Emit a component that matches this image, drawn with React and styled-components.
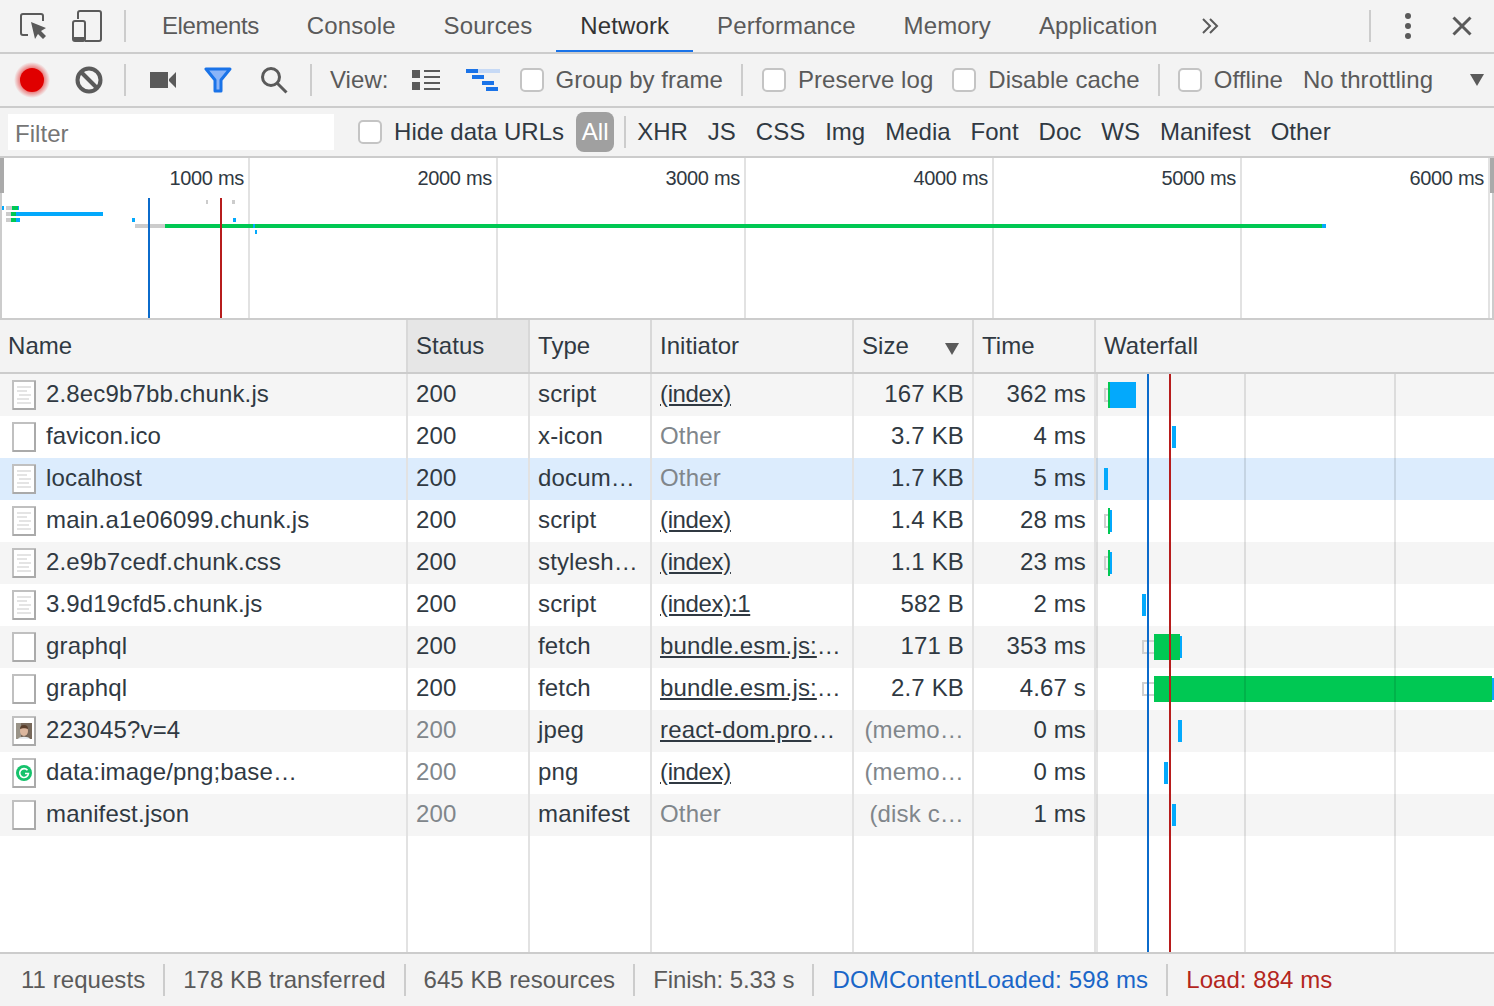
import React from "react";
import styled, { createGlobalStyle } from "styled-components";

const GlobalStyle = createGlobalStyle`
    html, body {
        margin: 0;
        padding: 0;
        background: #fff;
    }
    * {
        box-sizing: border-box;
    }
`;

const Page = styled.div`
    width: 1494px;
    height: 1006px;
    display: flex;
    flex-direction: column;
    overflow: hidden;
    font-family: "Liberation Sans", Arial, sans-serif;
    font-size: 24px;
    letter-spacing: 0.05px;
    color: #303942;
`;

const TabBar = styled.div`
    height: 54px;
    flex: none;
    display: flex;
    align-items: center;
    padding-left: 20px;
    background: #f3f3f3;
    border-bottom: 2px solid #ccc;
`;

const Tab = styled.div`
    height: 52px;
    padding: 0 24px;
    display: flex;
    align-items: center;
    letter-spacing: ${(p) => (p.$tight ? "-0.4px" : "0.1px")};
    color: ${(p) => (p.$active ? "#333" : "#5a5a5a")};
    box-shadow: ${(p) => (p.$active ? "inset 0 -2px 0 #1a73e8" : "none")};
`;

const Toolbar = styled.div`
    height: 54px;
    flex: none;
    display: flex;
    align-items: center;
    background: #f3f3f3;
    border-bottom: 2px solid #ccc;
    color: #5a5a5a;
`;

const Sep = styled.div`
    flex: none;
    width: 2px;
    height: 32px;
    background: #ccc;
    margin-left: ${(p) => p.$ml || 0}px;
    margin-right: ${(p) => p.$mr || 0}px;
`;

const Icon = styled.svg`
    flex: none;
    display: block;
    margin-left: ${(p) => p.$ml || 0}px;
`;

const Check = styled.input.attrs({ type: "checkbox" })`
    appearance: none;
    flex: none;
    width: 24px;
    height: 24px;
    margin: 0 12px 0 ${(p) => p.$ml || 0}px;
    background: #fff;
    border: 2px solid #c4c4c4;
    border-radius: 5px;
`;

const Label = styled.span`
    flex: none;
    white-space: nowrap;
    margin-left: ${(p) => p.$ml || 0}px;
`;

const FilterBar = styled.div`
    height: 50px;
    flex: none;
    display: flex;
    align-items: center;
    padding-left: 8px;
    background: #f3f3f3;
    border-bottom: 2px solid #ccc;
`;

const FilterInput = styled.div`
    width: 326px;
    height: 36px;
    flex: none;
    display: flex;
    align-items: center;
    padding: 3px 0 0 7px;
    margin-right: 24px;
    background: #fff;
    color: #757575;
`;

const Pill = styled.div`
    flex: none;
    height: 40px;
    width: 38px;
    margin: 0 10px 0 12px;
    display: flex;
    align-items: center;
    justify-content: center;
    border-radius: 8px;
    background: #a0a0a0;
    color: #fff;
`;

const TypeFilters = styled.div`
    display: flex;
    gap: 20px;
    margin-left: 11px;
    letter-spacing: 0;
`;

const Overview = styled.div`
    position: relative;
    height: 162px;
    flex: none;
    display: flex;
    padding-left: 2px;
    background: #fff;
    border-bottom: 2px solid #ccc;
`;

const OverviewTick = styled.div`
    width: 248px;
    flex: none;
    padding: 8px 4px 0 0;
    text-align: right;
    font-size: 20px;
    letter-spacing: -0.3px;
    line-height: 24px;
    border-right: 2px solid #e2e2e2;
`;

const Chart = styled.svg`
    position: absolute;
    left: 0;
    top: 0;
    pointer-events: none;
`;

const Table = styled.div`
    flex: 1;
    min-height: 0;
    display: flex;
    flex-direction: column;
`;

const Columns = "408px 122px 122px 202px 120px 122px 1fr";

const HeaderRow = styled.div`
    height: 54px;
    flex: none;
    display: grid;
    grid-template-columns: ${Columns};
    background: #f3f3f3;
    border-bottom: 2px solid #ccc;
`;

const HeaderCell = styled.div`
    position: relative;
    display: flex;
    align-items: center;
    padding: 0 8px;
    background: ${(p) => (p.$sorted ? "#e6e6e6" : "transparent")};
    border-right: 2px solid #d8d8d8;
`;

const SortArrow = styled.svg`
    position: absolute;
    right: 13px;
    top: 23px;
`;

const Body = styled.div`
    position: relative;
    flex: 1;
    min-height: 0;
    display: flex;
    flex-direction: column;
`;

const Row = styled.div`
    height: ${(p) => (p.$filler ? "auto" : "42px")};
    flex: ${(p) => (p.$filler ? 1 : "none")};
    display: grid;
    grid-template-columns: ${Columns};
    letter-spacing: 0.15px;
    background: ${(p) => (p.$selected ? "#dcecfd" : p.$odd ? "#f5f5f5" : "#fff")};
`;

const Cell = styled.div`
    min-width: 0;
    padding: 0 8px;
    line-height: 40px;
    white-space: nowrap;
    overflow: hidden;
    text-overflow: ellipsis;
    text-align: ${(p) => (p.$right ? "right" : "left")};
    letter-spacing: ${(p) => (p.$tight ? "-0.35px" : "inherit")};
    color: ${(p) => (p.$muted ? "#80868b" : "inherit")};
    text-decoration: ${(p) => (p.$link ? "underline" : "none")};
    border-right: 2px solid #e2e2e2;
`;

const NameCell = styled(Cell)`
    display: flex;
    align-items: center;
    padding: 0 0 0 12px;
`;

const NameText = styled.span`
    margin: 0 0 2px 10px;
`;

const Footer = styled.div`
    height: 54px;
    flex: none;
    display: flex;
    align-items: center;
    background: #f3f3f3;
    border-top: 2px solid #ccc;
    color: #5a5a5a;
`;

const FooterItem = styled.div`
    flex: none;
    height: 32px;
    line-height: 32px;
    padding: 0 18px 0 ${(p) => (p.$first ? 21 : 18)}px;
    border-right: ${(p) => (p.$last ? "none" : "2px solid #ccc")};
    letter-spacing: ${(p) => p.$spacing || "inherit"};
    color: ${(p) => p.$color || "inherit"};
`;

const requests = [
    { name: "2.8ec9b7bb.chunk.js", icon: "doc", status: "200", type: "script", init: "(index)", link: true, size: "167 KB", time: "362 ms" },
    { name: "favicon.ico", icon: "blank", status: "200", type: "x-icon", init: "Other", size: "3.7 KB", time: "4 ms" },
    { name: "localhost", icon: "doc", status: "200", type: "document", init: "Other", size: "1.7 KB", time: "5 ms", selected: true },
    { name: "main.a1e06099.chunk.js", icon: "doc", status: "200", type: "script", init: "(index)", link: true, size: "1.4 KB", time: "28 ms" },
    { name: "2.e9b7cedf.chunk.css", icon: "doc", status: "200", type: "stylesheet", init: "(index)", link: true, size: "1.1 KB", time: "23 ms" },
    { name: "3.9d19cfd5.chunk.js", icon: "doc", status: "200", type: "script", init: "(index):1", link: true, size: "582 B", time: "2 ms" },
    { name: "graphql", icon: "blank", status: "200", type: "fetch", init: "bundle.esm.js:1234", link: true, size: "171 B", time: "353 ms" },
    { name: "graphql", icon: "blank", status: "200", type: "fetch", init: "bundle.esm.js:1234", link: true, size: "2.7 KB", time: "4.67 s" },
    { name: "223045?v=4", icon: "photo", status: "200", muted: true, type: "jpeg", init: "react-dom.production.min.js:1", link: true, size: "(memo…", sizeMuted: true, time: "0 ms" },
    { name: "data:image/png;base…", icon: "grammarly", status: "200", muted: true, type: "png", init: "(index)", link: true, size: "(memo…", sizeMuted: true, time: "0 ms" },
    { name: "manifest.json", icon: "blank", status: "200", muted: true, type: "manifest", init: "Other", size: "(disk c…", sizeMuted: true, time: "1 ms" },
];

const BLUE = "#03a9fc";
const GREEN = "#00c853";

// [x, y, width, height, colour]; x and y are page pixels minus the chart origin
const overviewBars = [
    [2, 48, 2, 4, BLUE], [6, 48, 6, 4, "#ccc"], [12, 48, 6, 4, GREEN], [18, 48, 1, 4, BLUE],
    [6, 54, 5, 4, "#ccc"], [11, 54, 5, 4, GREEN], [16, 54, 87, 4, BLUE],
    [6, 60, 5, 4, "#ccc"], [11, 60, 5, 4, GREEN], [16, 60, 4, 4, BLUE],
    [132, 60, 3, 4, BLUE], [233, 60, 3, 4, BLUE],
    [206, 42, 2, 4, "#ccc"], [232, 42, 3, 4, "#ccc"],
    [135, 66, 30, 4, "#ccc"], [165, 66, 1161, 4, GREEN], [1322, 66, 4, 4, BLUE],
    [253, 66, 2, 4, BLUE], [255, 72, 2, 4, BLUE],
];

const waterfallRows = [
    { wait: [8, 4], green: [12, 2], blue: [14, 26], tall: true },
    { blue: [76, 4] },
    { blue: [8, 4] },
    { wait: [8, 4], green: [12, 2], blue: [14, 2] },
    { wait: [8, 4], green: [12, 2], blue: [14, 2] },
    { blue: [46, 4] },
    { wait: [46, 12], green: [58, 26], blue: [84, 2] },
    { wait: [46, 12], green: [58, 338], blue: [396, 2] },
    { blue: [82, 4] },
    { blue: [68, 4] },
    { blue: [76, 4] },
];

function FileIcon({ kind }) {
    return (
        <Icon width="24" height="30" viewBox="0 0 24 30">
            <rect x="1" y="1" width="22" height="28" fill="#fff" stroke="#c0c0c0" strokeWidth="2" />
            <path d="M1 29h22V1" fill="none" stroke="#aaa" strokeWidth="2" />
            {kind === "doc" && (
                <path d="M5 7h14M5 11h10M7 15h12M5 19h12M5 23h14" stroke="#e4e4e4" strokeWidth="2" />
            )}
            {kind === "photo" && (
                <g>
                    <rect x="4" y="7" width="16" height="16" fill="#77685a" />
                    <rect x="4" y="7" width="5" height="16" fill="#9a9488" />
                    <ellipse cx="12" cy="15" rx="4" ry="5" fill="#dcb79e" />
                    <path d="M8 13a4 4 0 0 1 8 0c-2-1-6-1-8 0z" fill="#5a3e2b" />
                    <path d="M6 23c1-3 11-3 12 0z" fill="#e8ecef" />
                </g>
            )}
            {kind === "grammarly" && (
                <g>
                    <circle cx="12" cy="15" r="8" fill="#15c26b" />
                    <path d="M15.5 12.2a4.4 4.4 0 1 0 1 3.3h-3.5" fill="none" stroke="#fff" strokeWidth="1.6" />
                </g>
            )}
        </Icon>
    );
}

function Waterfall() {
    return (
        <Chart style={{ left: 1094 }} width="400" height="578" viewBox="0 0 400 578">
            <rect x="2" y="0" width="2" height="578" fill="rgba(0,0,0,0.1)" />
            {waterfallRows.map((r, i) => {
                const top = i * 42;
                return (
                    <g key={i}>
                        {r.wait && (
                            <path
                                d={`M${r.wait[0] + r.wait[1] + 2} ${top + 15}H${r.wait[0] + 3}V${top + 27}H${r.wait[0] + r.wait[1] + 2}`}
                                fill="none"
                                stroke="#d0d0d0"
                                strokeWidth="2"
                            />
                        )}
                        {r.blue && (
                            <rect x={r.blue[0] + 2} y={top + (r.tall ? 8 : 10)} width={r.blue[1]} height={r.tall ? 26 : 22} fill={BLUE} />
                        )}
                        {r.green && <rect x={r.green[0] + 2} y={top + 8} width={r.green[1]} height="26" fill={GREEN} />}
                    </g>
                );
            })}
            <rect x="150" y="0" width="2" height="578" fill="rgba(0,0,0,0.1)" />
            <rect x="300" y="0" width="2" height="578" fill="rgba(0,0,0,0.1)" />
            <rect x="53" y="0" width="2" height="578" fill="#0b6bcb" />
            <rect x="75" y="0" width="2" height="578" fill="#b71c1c" />
        </Chart>
    );
}

export default function App() {
    return (
        <Page>
            <GlobalStyle />
            <TabBar>
                <Icon width="28" height="28" viewBox="0 0 28 28">
                    <path d="M8 23H3a2 2 0 0 1-2-2V4a2 2 0 0 1 2-2h18a2 2 0 0 1 2 2v5" fill="none" stroke="#5a5a5a" strokeWidth="2" />
                    <path d="M11 10l15 6-5 3 5 5-3 3-5-5-3 5z" fill="#5a5a5a" />
                </Icon>
                <Icon $ml={24} width="30" height="32" viewBox="0 0 30 32">
                    <path d="M6 9V3a2 2 0 0 1 2-2h19a2 2 0 0 1 2 2v26a2 2 0 0 1-2 2H13" fill="none" stroke="#5a5a5a" strokeWidth="2" />
                    <rect x="1" y="11" width="12" height="20" rx="2" fill="none" stroke="#5a5a5a" strokeWidth="2" />
                    <rect x="1" y="27" width="12" height="4" fill="#5a5a5a" />
                </Icon>
                <Sep $ml={22} $mr={12} />
                <Tab $tight>Elements</Tab>
                <Tab>Console</Tab>
                <Tab>Sources</Tab>
                <Tab $active>Network</Tab>
                <Tab>Performance</Tab>
                <Tab>Memory</Tab>
                <Tab>Application</Tab>
                <Icon $ml={20} width="18" height="16" viewBox="0 0 18 16">
                    <path d="M2 1l7 7-7 7M9 1l7 7-7 7" fill="none" stroke="#5a5a5a" strokeWidth="2" />
                </Icon>
                <Sep style={{ marginLeft: "auto" }} />
                <Icon $ml={34} width="6" height="26" viewBox="0 0 6 26">
                    <circle cx="3" cy="3" r="3" fill="#5a5a5a" />
                    <circle cx="3" cy="13" r="3" fill="#5a5a5a" />
                    <circle cx="3" cy="23" r="3" fill="#5a5a5a" />
                </Icon>
                <Icon $ml={41} width="20" height="20" viewBox="0 0 20 20">
                    <path d="M1.5 1.5l17 17M18.5 1.5l-17 17" fill="none" stroke="#5a5a5a" strokeWidth="3" />
                </Icon>
                <div style={{ width: 22 }} />
            </TabBar>

            <Toolbar>
                <Icon $ml={14} width="36" height="36" viewBox="0 0 36 36">
                    <defs>
                        <radialGradient id="recordGlow">
                            <stop offset="0.65" stopColor="#e00000" stopOpacity="0.5" />
                            <stop offset="1" stopColor="#e00000" stopOpacity="0" />
                        </radialGradient>
                    </defs>
                    <circle cx="18" cy="18" r="18" fill="url(#recordGlow)" />
                    <circle cx="18" cy="18" r="12" fill="#e00000" />
                </Icon>
                <Icon $ml={25} width="28" height="28" viewBox="0 0 28 28">
                    <circle cx="14" cy="14" r="11.5" fill="none" stroke="#5a5a5a" strokeWidth="4" />
                    <path d="M6 6l16 16" stroke="#5a5a5a" strokeWidth="4" />
                </Icon>
                <Sep $ml={21} />
                <Icon $ml={24} width="26" height="18" viewBox="0 0 26 18">
                    <path d="M0 1h18v16H0zM19 8l7-7v16l-7-7z" fill="#5a5a5a" />
                </Icon>
                <Icon $ml={28} width="28" height="26" viewBox="0 0 28 26">
                    <path d="M2 2h24L17 13v11h-6V13z" fill="#8ab4f8" stroke="#1a73e8" strokeWidth="3" strokeLinejoin="round" />
                </Icon>
                <Icon $ml={28} width="28" height="28" viewBox="0 0 28 28">
                    <circle cx="11" cy="11" r="8.5" fill="none" stroke="#5a5a5a" strokeWidth="3" />
                    <path d="M17 17l9.5 9.5" stroke="#5a5a5a" strokeWidth="3" />
                </Icon>
                <Sep $ml={22} />
                <Label $ml={18}>View:</Label>
                <Icon $ml={23} width="28" height="20" viewBox="0 0 28 20">
                    <path d="M0 0h8v8H0zM0 12h8v8H0z" fill="#5a5a5a" />
                    <path d="M12 1h16M12 7h16M12 13h16M12 19h16" stroke="#5a5a5a" strokeWidth="2" />
                </Icon>
                <Icon $ml={26} width="34" height="22" viewBox="0 0 34 22">
                    <rect x="12" y="0" width="22" height="4" fill="#c6d9f5" />
                    <rect x="0" y="0" width="12" height="4" fill="#1a73e8" />
                    <rect x="6" y="6" width="12" height="4" fill="#1a73e8" />
                    <rect x="16" y="12" width="12" height="4" fill="#1a73e8" />
                    <rect x="20" y="18" width="12" height="4" fill="#1a73e8" />
                </Icon>
                <Check $ml={20} />
                <Label>Group by frame</Label>
                <Sep $ml={18} />
                <Check $ml={19} />
                <Label>Preserve log</Label>
                <Check $ml={19} />
                <Label>Disable cache</Label>
                <Sep $ml={18} />
                <Check $ml={18} />
                <Label>Offline</Label>
                <Label $ml={20}>No throttling</Label>
                <Icon $ml={37} width="14" height="12" viewBox="0 0 14 12">
                    <path d="M0 0h14L7 12z" fill="#5a5a5a" />
                </Icon>
            </Toolbar>

            <FilterBar>
                <FilterInput>Filter</FilterInput>
                <Check />
                <Label>Hide data URLs</Label>
                <Pill>All</Pill>
                <Sep />
                <TypeFilters>
                    <span>XHR</span>
                    <span>JS</span>
                    <span>CSS</span>
                    <span>Img</span>
                    <span>Media</span>
                    <span>Font</span>
                    <span>Doc</span>
                    <span>WS</span>
                    <span>Manifest</span>
                    <span>Other</span>
                </TypeFilters>
            </FilterBar>

            <Overview>
                {["1000 ms", "2000 ms", "3000 ms", "4000 ms", "5000 ms", "6000 ms"].map((tick) => (
                    <OverviewTick key={tick}>{tick}</OverviewTick>
                ))}
                <Chart width="1494" height="160" viewBox="0 0 1494 160">
                    <rect x="0" y="0" width="4" height="35" fill="#aaa" />
                    <rect x="0" y="35" width="2" height="125" fill="#ccc" />
                    <rect x="1490" y="0" width="4" height="35" fill="#aaa" />
                    <rect x="1492" y="35" width="2" height="125" fill="#ccc" />
                    {overviewBars.map((b, i) => (
                        <rect key={i} x={b[0]} y={b[1]} width={b[2]} height={b[3]} fill={b[4]} />
                    ))}
                    <rect x="148" y="40" width="2" height="120" fill="#0b6bcb" />
                    <rect x="220" y="40" width="2" height="120" fill="#b71c1c" />
                </Chart>
            </Overview>

            <Table>
                <HeaderRow>
                    <HeaderCell>Name</HeaderCell>
                    <HeaderCell $sorted>Status</HeaderCell>
                    <HeaderCell>Type</HeaderCell>
                    <HeaderCell>Initiator</HeaderCell>
                    <HeaderCell>
                        Size
                        <SortArrow width="14" height="12" viewBox="0 0 14 12">
                            <path d="M0 0h14L7 12z" fill="#5a5a5a" />
                        </SortArrow>
                    </HeaderCell>
                    <HeaderCell>Time</HeaderCell>
                    <HeaderCell style={{ borderRight: "none" }}>Waterfall</HeaderCell>
                </HeaderRow>
                <Body>
                    {requests.map((r, i) => (
                        <Row key={i} $odd={i % 2 === 0} $selected={r.selected}>
                            <NameCell>
                                <FileIcon kind={r.icon} />
                                <NameText>{r.name}</NameText>
                            </NameCell>
                            <Cell $muted={r.muted}>{r.status}</Cell>
                            <Cell>{r.type}</Cell>
                            <Cell $link={r.link} $muted={!r.link} $tight={r.init.startsWith("(index)")}>{r.init}</Cell>
                            <Cell $right $muted={r.sizeMuted}>{r.size}</Cell>
                            <Cell $right>{r.time}</Cell>
                            <Cell style={{ borderRight: "none" }} />
                        </Row>
                    ))}
                    <Row $filler>
                        <Cell />
                        <Cell />
                        <Cell />
                        <Cell />
                        <Cell />
                        <Cell />
                        <Cell style={{ borderRight: "none" }} />
                    </Row>
                    <Waterfall />
                </Body>
            </Table>

            <Footer>
                <FooterItem $first>11 requests</FooterItem>
                <FooterItem>178 KB transferred</FooterItem>
                <FooterItem>645 KB resources</FooterItem>
                <FooterItem $spacing="-0.1px">Finish: 5.33 s</FooterItem>
                <FooterItem $spacing="0.15px" $color="#1a66c8">DOMContentLoaded: 598 ms</FooterItem>
                <FooterItem $last $color="#b3261e">Load: 884 ms</FooterItem>
            </Footer>
        </Page>
    );
}
